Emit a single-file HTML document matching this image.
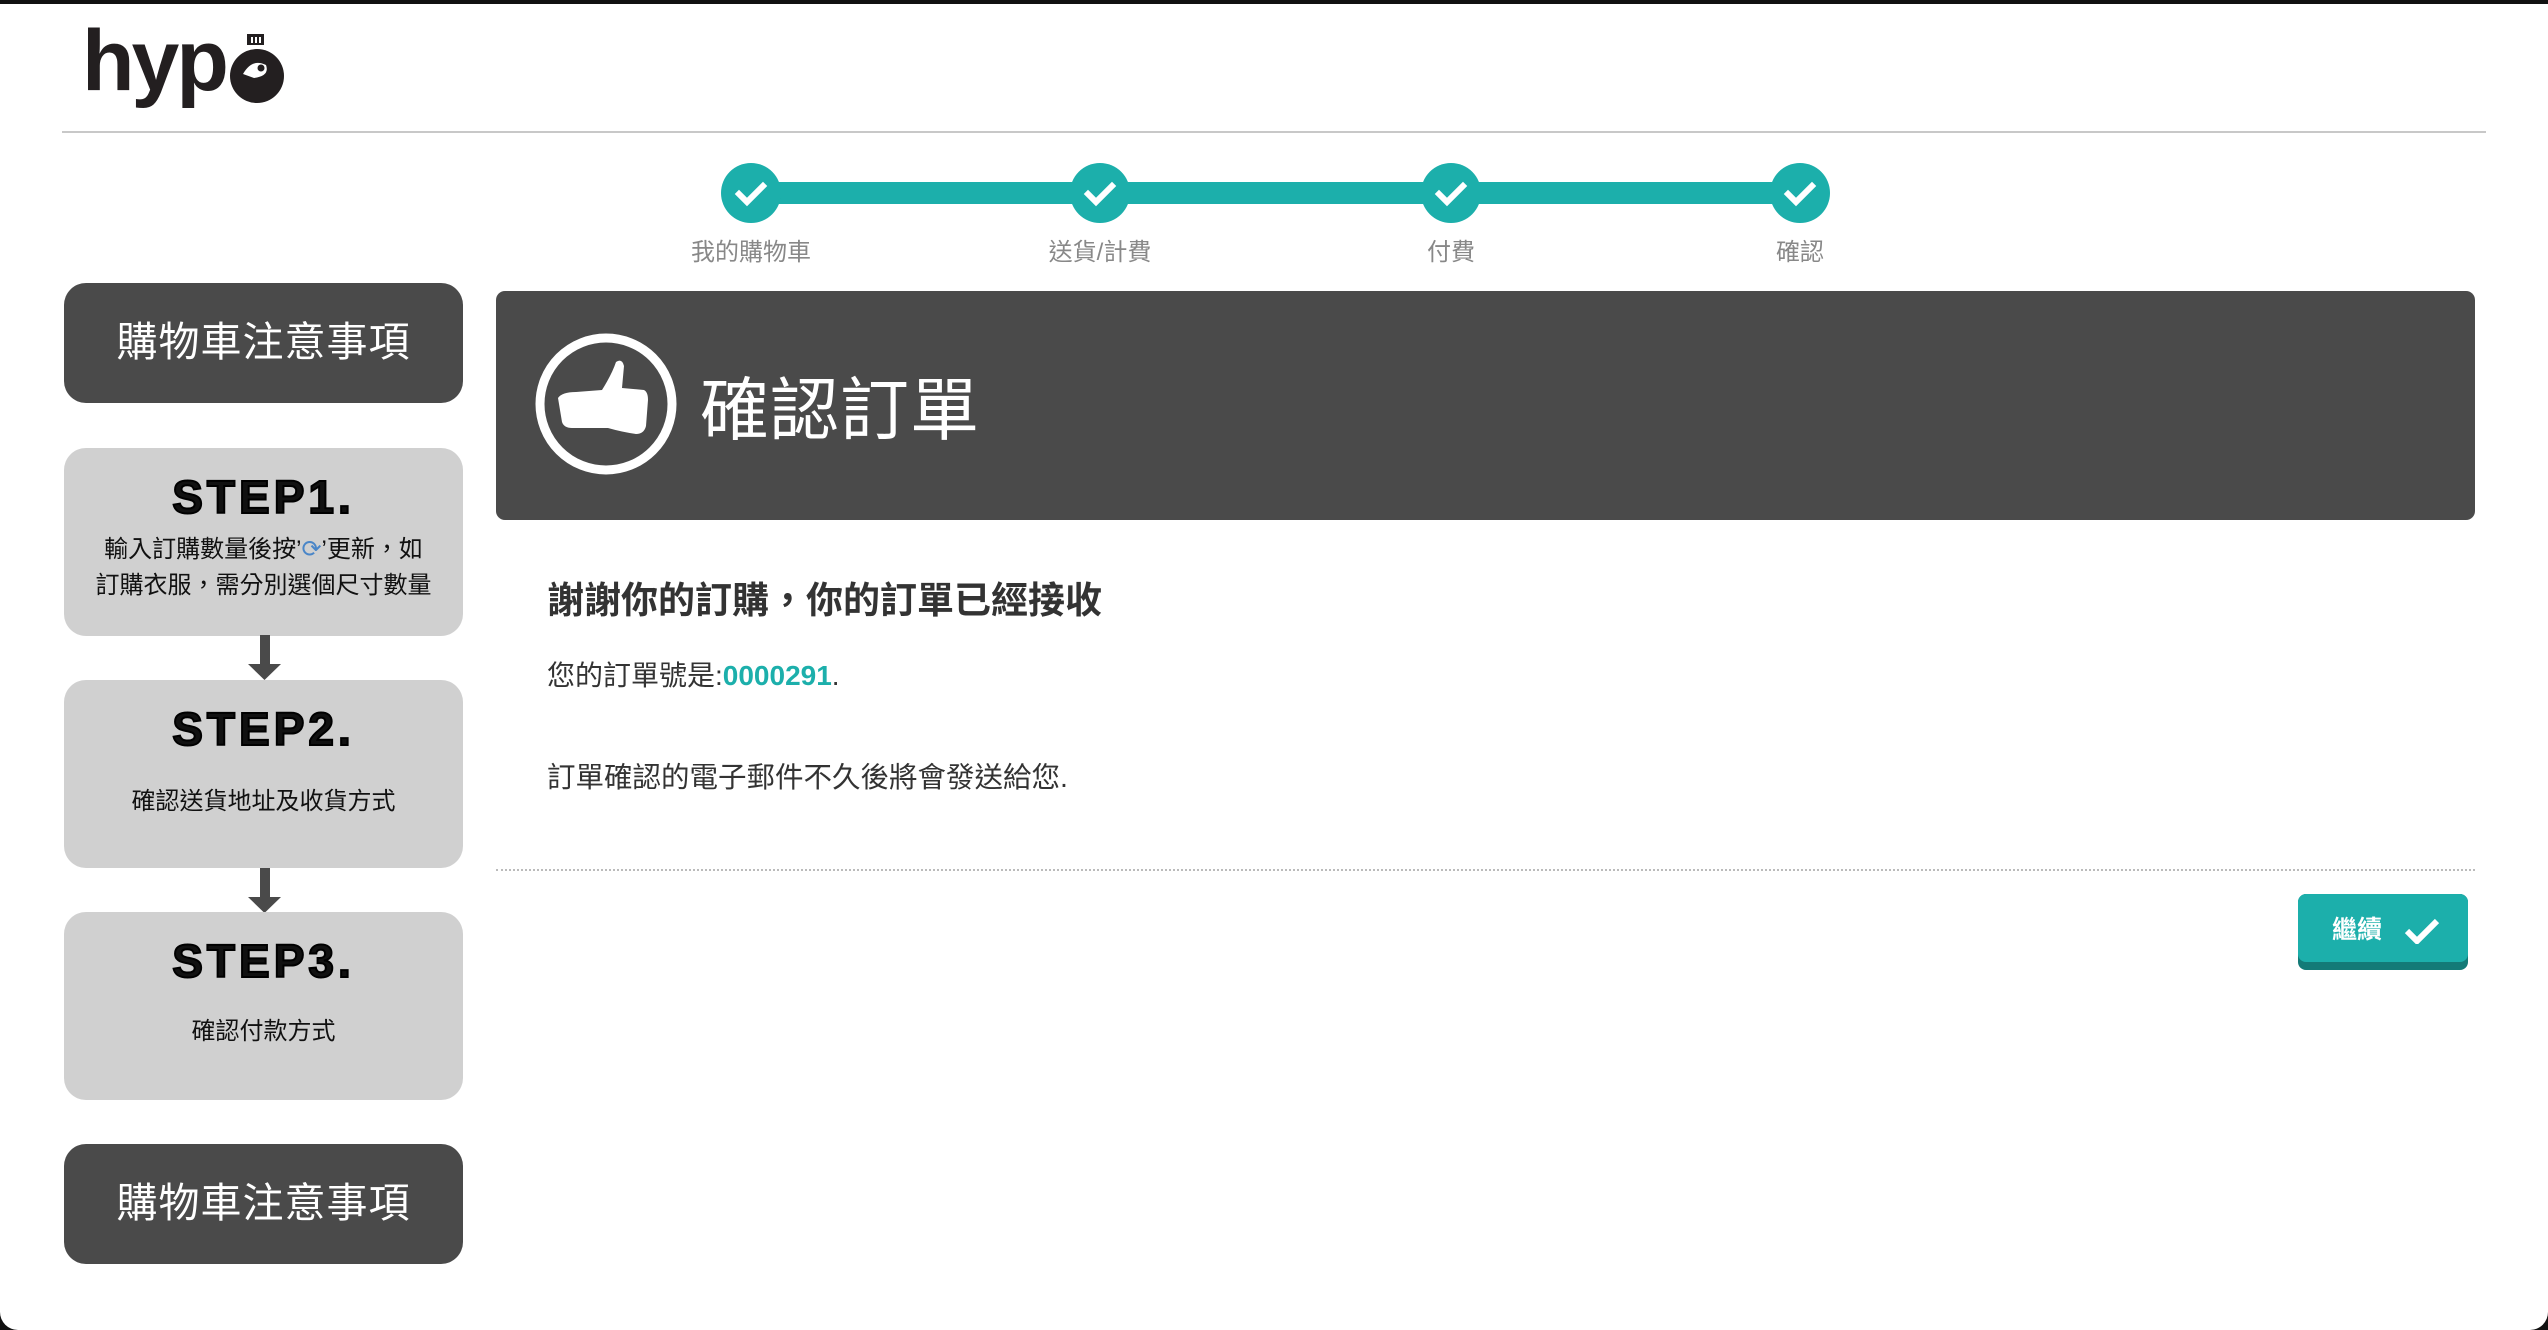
<!DOCTYPE html>
<html><head><meta charset="utf-8"><style>
*{margin:0;padding:0;box-sizing:border-box}
html,body{width:2548px;height:1330px;background:#111;overflow:hidden}
#pg{position:absolute;left:0;top:4px;width:2548px;height:1326px;background:#fff;border-radius:0 0 18px 18px;font-family:"Liberation Sans","Noto Sans CJK TC",sans-serif}
.a{position:absolute}
.dark{background:#4a4a4a;border-radius:22px;color:#fff;font-size:41px;text-align:center;left:64px;width:399px;height:120px;line-height:118px;letter-spacing:1px}
.step{background:#d0d0d0;border-radius:22px;left:64px;width:399px;height:188px;text-align:center;color:#111}
.step h3{font-family:"Liberation Sans",sans-serif;font-weight:900;font-size:46px;margin-top:22px;letter-spacing:4px;-webkit-text-stroke:2px #000}
.step p{font-size:24px;line-height:36px;white-space:nowrap}
.arr{left:248px;width:33px;height:45px}
.lbl{font-size:24px;color:#888;top:228px;width:200px;text-align:center}
</style></head><body><div id="pg">
<div class="a" style="left:82px;top:14px;font-size:86px;font-weight:bold;color:#231f20;letter-spacing:-3px;line-height:86px">hyp</div>
<svg class="a" style="left:230px;top:28px" width="56" height="74" viewBox="0 0 56 74">
<rect x="17" y="2" width="17" height="11" fill="#231f20"/><rect x="21" y="5" width="2" height="6" fill="#fff"/><rect x="25" y="5" width="2" height="6" fill="#fff"/><rect x="29" y="5" width="2" height="6" fill="#fff"/>
<circle cx="27" cy="44" r="27" fill="#231f20"/>
<path d="M13 42 Q22 26 36 33 Q40 44 24 46 Z" fill="#fff"/><circle cx="31" cy="36" r="3.5" fill="#231f20"/>
</svg>
<div class="a" style="left:62px;top:127px;width:2424px;height:2px;background:#c8c8c8"></div>
<div class="a" style="left:751px;top:178px;width:1049px;height:22px;background:#1cafab"></div>
<svg class="a" style="left:0;top:0" width="2548" height="260">
<g fill="#1cafab"><circle cx="751" cy="189" r="30"/><circle cx="1100" cy="189" r="30"/><circle cx="1451" cy="189" r="30"/><circle cx="1800" cy="189" r="30"/></g>
<g fill="none" stroke="#fff" stroke-width="6" stroke-linecap="square">
<path d="M739 190l8 8 16-16"/><path d="M1088 190l8 8 16-16"/><path d="M1439 190l8 8 16-16"/><path d="M1788 190l8 8 16-16"/></g>
</svg>
<div class="a lbl" style="left:651px">我的購物車</div>
<div class="a lbl" style="left:1000px">送貨/計費</div>
<div class="a lbl" style="left:1351px">付費</div>
<div class="a lbl" style="left:1700px">確認</div>
<div class="a dark" style="top:279px">購物車注意事項</div>
<div class="a step" style="top:444px"><h3>STEP1.</h3><p style="margin-top:8px">輸入訂購數量後按’<span style="color:#4a86c8">⟳</span>’更新，如<br>訂購衣服，需分別選個尺寸數量</p></div>
<svg class="a arr" style="top:631px" viewBox="0 0 33 45"><rect x="12" y="0" width="10" height="32" fill="#4a4a4a"/><path d="M0 29h33L16.5 45z" fill="#4a4a4a"/></svg>
<div class="a step" style="top:676px"><h3>STEP2.</h3><p style="margin-top:28px">確認送貨地址及收貨方式</p></div>
<svg class="a arr" style="top:864px" viewBox="0 0 33 45"><rect x="12" y="0" width="10" height="32" fill="#4a4a4a"/><path d="M0 29h33L16.5 45z" fill="#4a4a4a"/></svg>
<div class="a step" style="top:908px"><h3>STEP3.</h3><p style="margin-top:26px">確認付款方式</p></div>
<div class="a dark" style="top:1140px">購物車注意事項</div>
<div class="a" style="left:496px;top:287px;width:1979px;height:229px;background:#4a4a4a;border-radius:9px"></div>
<svg class="a" style="left:532px;top:326px" width="148" height="148" viewBox="0 0 148 148">
<circle cx="74" cy="74" r="66" fill="none" stroke="#fff" stroke-width="9"/>
<path d="M26 68 Q30 62 44 62 L70 60 Q80 44 84 32 Q90 28 92 36 L90 58 L112 60 Q116 62 116 70 L114 96 Q112 104 104 104 Q90 102 76 98 L40 98 Q32 98 30 92 Z" fill="#fff"/>
</svg>
<div class="a" style="left:700px;top:364px;font-size:69px;color:#fff;line-height:86px;letter-spacing:1px">確認訂單</div>
<div class="a" style="left:547px;top:566px;font-size:37px;font-weight:bold;color:#333">謝謝你的訂購，你的訂單已經接收</div>
<div class="a" style="left:547px;top:650px;font-size:28px;color:#333">您的訂單號是:<b style="color:#1cafab">0000291</b>.</div>
<div class="a" style="left:547px;top:751px;font-size:28.5px;color:#333">訂單確認的電子郵件不久後將會發送給您.</div>
<div class="a" style="left:496px;top:865px;width:1979px;border-top:2px dotted #bbb"></div>
<div class="a" style="left:2298px;top:890px;width:170px;height:76px;background:#137a77;border-radius:8px"></div>
<div class="a" style="left:2298px;top:890px;width:170px;height:68px;background:#1cafab;border-radius:8px;color:#fff;font-size:25px;font-weight:bold;line-height:72px;padding-left:34px">繼續</div>
<svg class="a" style="left:2404px;top:914px" width="36" height="26" viewBox="0 0 36 26"><path d="M3 13l10 10L33 3" fill="none" stroke="#fff" stroke-width="6"/></svg>
</div></body></html>
